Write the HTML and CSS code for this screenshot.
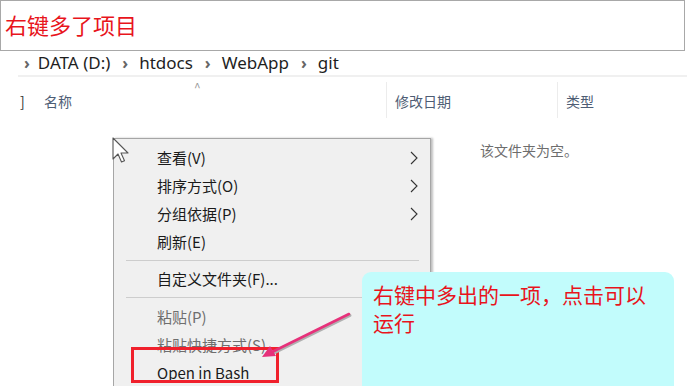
FILE: index.html
```
<!DOCTYPE html>
<html lang="zh-CN">
<head>
    <meta charset="UTF-8">
    <title>右键多了项目</title>
    <link rel="stylesheet" href="styles.css">
</head>
<body>
    <div class="title-box">右键多了项目</div>

    <div class="breadcrumb">
        <span class="crumb-sep">›</span><span>DATA (D:)</span>
        <span class="crumb-sep">›</span><span>htdocs</span>
        <span class="crumb-sep">›</span><span>WebApp</span>
        <span class="crumb-sep">›</span><span>git</span>
    </div>

    <div class="header-row">
        <div class="col-check">]</div>
        <div class="col-name">名称<span class="sort-mark">^</span></div>
        <div class="col-date">修改日期</div>
        <div class="col-type">类型</div>
    </div>

    <div class="empty-note">该文件夹为空。</div>

    <!-- 右键菜单 -->
    <div class="context-menu">
        <div class="menu-item">查看(V)<svg class="chevron" width="8" height="14" viewBox="0 0 8 14"><polyline points="1,1 7,7 1,13" fill="none" stroke="#333" stroke-width="1.1"/></svg></div>
        <div class="menu-item">排序方式(O)<svg class="chevron" width="8" height="14" viewBox="0 0 8 14"><polyline points="1,1 7,7 1,13" fill="none" stroke="#333" stroke-width="1.1"/></svg></div>
        <div class="menu-item">分组依据(P)<svg class="chevron" width="8" height="14" viewBox="0 0 8 14"><polyline points="1,1 7,7 1,13" fill="none" stroke="#333" stroke-width="1.1"/></svg></div>
        <div class="menu-item">刷新(E)</div>
        <div class="menu-sep"></div>
        <div class="menu-item">自定义文件夹(F)...</div>
        <div class="menu-sep sep-wide"></div>
        <div class="menu-item disabled">粘贴(P)</div>
        <div class="menu-item disabled">粘贴快捷方式(S)</div>
        <div class="menu-item">Open in Bash</div>
    </div>

    <!-- 鼠标指针 -->
    <svg class="cursor" width="18" height="27" viewBox="0 0 18 27">
        <path d="M1,1 L1,22 L6,17 L9.5,25 L12.5,23.8 L9,16 L16,16 Z" fill="#fff" stroke="#555" stroke-width="1.1" stroke-linejoin="round"/>
    </svg>

    <div class="highlight-box"></div>

    <svg class="arrow" width="110" height="60" viewBox="250 305 110 60">
        <line x1="349" y1="314" x2="272" y2="352" stroke="#b0b0b0" stroke-width="3" stroke-linecap="round" transform="translate(1,1.5)"/>
        <line x1="349" y1="314" x2="272" y2="352" stroke="#e6317a" stroke-width="2.6" stroke-linecap="round"/>
        <polygon points="262,357 276,356 270,346" fill="#e6317a"/>
    </svg>

    <div class="callout">右键中多出的一项，点击可以运行</div>
</body>
</html>
```

FILE: styles.css
```
body {
    margin: 0;
    width: 687px;
    height: 386px;
    overflow: hidden;
    background: #fff;
    font-family: "Noto Sans", "Noto Sans CJK SC", sans-serif;
    position: relative;
}

.title-box {
    width: 679px;
    height: 49px;
    border: 1px solid #a8a8a8;
    color: #e8141c;
    font-family: "Noto Sans CJK SC", sans-serif;
    font-size: 22px;
    line-height: 46px;
    padding-left: 4px;
}

.breadcrumb {
    margin-left: 18px;
    height: 24px;
    line-height: 24px;
    border-bottom: 2px solid #f0f0f0;
    font-size: 17px;
    color: #1e1e1e;
    display: flex;
    align-items: center;
}

.crumb-sep {
    color: #666;
    font-size: 16px;
    font-weight: bold;
    margin: 0 11px 0 12px;
}

.crumb-sep:first-child {
    margin-left: 6px;
    margin-right: 8px;
}

.header-row {
    display: grid;
    grid-template-columns: 44px 342px 171px 1fr;
    height: 41px;
    font-family: "Noto Sans CJK SC", sans-serif;
    font-size: 14px;
    color: #4e5d74;
}

.header-row > div {
    padding-top: 14px;
    line-height: 20px;
}

.col-check {
    padding-left: 20px;
    color: #333;
}

.col-name {
    position: relative;
}

.sort-mark {
    position: absolute;
    left: 150px;
    top: 0px;
    color: #999;
    font-size: 12px;
}

.col-date,
.col-type {
    border-left: 1px solid #ececec;
    padding-left: 8px;
    margin-top: 5px;
    padding-top: 9px !important;
}

.empty-note {
    margin-left: 480px;
    margin-top: 22px;
    font-family: "Noto Sans CJK SC", sans-serif;
    font-size: 14px;
    color: #6d6d6d;
    line-height: 20px;
}

.context-menu {
    position: absolute;
    left: 113px;
    top: 138px;
    width: 318px;
    height: 248px;
    box-sizing: border-box;
    background: #f0f0f0;
    border: 1px solid #a6a6a6;
    border-bottom: none;
    box-shadow: 2px 0 2px rgba(0, 0, 0, 0.25);
    padding-top: 5px;
    overflow: hidden;
    font-family: "Noto Sans CJK SC", sans-serif;
    font-size: 15px;
    color: #1a1a1a;
}

.menu-item {
    height: 28px;
    line-height: 28px;
    padding-left: 43px;
    position: relative;
}

.menu-item.disabled {
    color: #6e6e6e;
}

.chevron {
    position: absolute;
    right: 12px;
    top: 7px;
}

.menu-sep {
    height: 1px;
    background: #cdcdcd;
    margin: 4px 11px 4px 12px;
}

.sep-wide {
    margin-bottom: 5px;
}

.cursor {
    position: absolute;
    left: 112px;
    top: 137px;
}

.highlight-box {
    position: absolute;
    left: 131px;
    top: 347px;
    width: 142px;
    height: 30px;
    border: 3px solid #f0202c;
}

.arrow {
    position: absolute;
    left: 250px;
    top: 305px;
}

.callout {
    position: absolute;
    left: 362px;
    top: 272px;
    width: 312px;
    height: 114px;
    box-sizing: border-box;
    padding: 8px 10px 0 11px;
    background: #c2fcfc;
    border-radius: 9px 9px 0 0;
    font-family: "Noto Sans CJK SC", sans-serif;
    font-size: 21px;
    line-height: 28px;
    color: #e8141c;
}
```
